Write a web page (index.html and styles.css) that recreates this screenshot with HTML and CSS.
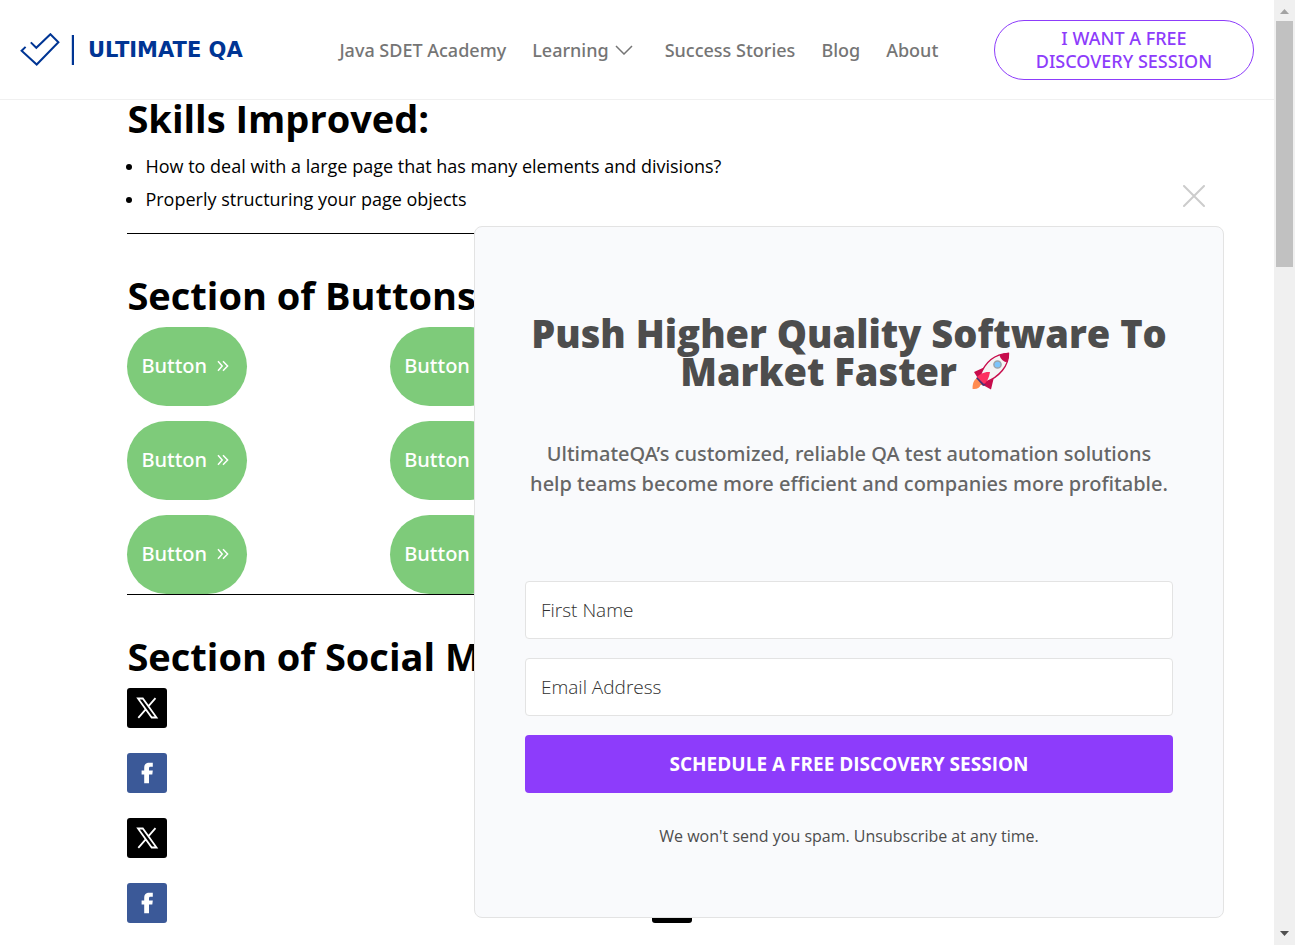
FILE: index.html
```html
<!DOCTYPE html>
<html lang="en">
<head>
<meta charset="utf-8">
<title>Ultimate QA</title>
<link rel="stylesheet" href="styles.css">
</head>
<body>
<svg class="symbols" aria-hidden="true">
  <symbol id="icon-x" viewBox="0 0 24 24">
    <path fill="none" stroke="currentColor" stroke-width="1.800" d="M3 2.500h4.800L21.500 21.500h-4.800zM20.500 2.200 13.300 10.400M10.700 13.400 3.300 21.800"/>
  </symbol>
  <symbol id="icon-facebook" viewBox="0 0 24 24">
    <path fill="currentColor" d="M9.200 22.300V13.500H6.600V9.500h2.600V7c0-3.600 1.800-5.200 5-5.200h3.600v4h-2.300c-1.200 0-1.500.6-1.500 1.700v2h3.800l-.5 4h-3.300v8.800z"/>
  </symbol>
  <symbol id="icon-more" viewBox="0 0 12 12">
    <path fill="none" stroke="currentColor" stroke-width="1.500" d="M1 1.200 5.200 6 1 10.800M6 1.200 10.600 6 6 10.800"/>
  </symbol>
</svg>

<div class="viewport">
  <header class="header">
    <a class="logo" href="#">
      <svg class="logo-mark" viewBox="0 0 54 34" aria-hidden="true">
        <path d="M5.600 13.900 1.600 17.800 16.700 31.500 38.400 9.200 30.400 1.200 16.300 14.800 10.800 9.400"/>
        <path class="logo-bar" d="M53 2v30"/>
      </svg>
      <span class="logo-text">ULTIMATE QA</span>
    </a>
    <nav class="nav">
      <a href="#">Java SDET Academy</a>
      <a class="nav-parent" href="#">Learning
        <svg class="chevron" viewBox="0 0 18 10" aria-hidden="true"><path d="M1 1l8 8 8-8"/></svg>
      </a>
      <a href="#">Success Stories</a>
      <a href="#">Blog</a>
      <a href="#">About</a>
    </nav>
    <a class="cta" href="#">I WANT A FREE DISCOVERY SESSION</a>
  </header>

  <main class="content">
    <section class="skills">
      <h1>Skills Improved:</h1>
      <ul>
        <li>How to deal with a large page that has many elements and divisions?</li>
        <li>Properly structuring your page objects</li>
      </ul>
    </section>
    <section class="section">
      <h1>Section of Buttons</h1>
      <div class="button-grid">
        <button class="pill">Button <svg><use href="#icon-more"/></svg></button>
        <button class="pill">Button <svg><use href="#icon-more"/></svg></button>
        <button class="pill">Button <svg><use href="#icon-more"/></svg></button>
        <button class="pill">Button <svg><use href="#icon-more"/></svg></button>
        <button class="pill">Button <svg><use href="#icon-more"/></svg></button>
        <button class="pill">Button <svg><use href="#icon-more"/></svg></button>
      </div>
    </section>
    <section class="section">
      <h1>Section of Social Media</h1>
      <div class="social-grid">
        <div class="social-column">
          <a class="social x" href="#" aria-label="X"><svg><use href="#icon-x"/></svg></a>
          <a class="social facebook" href="#" aria-label="Facebook"><svg><use href="#icon-facebook"/></svg></a>
          <a class="social x" href="#" aria-label="X"><svg><use href="#icon-x"/></svg></a>
          <a class="social facebook" href="#" aria-label="Facebook"><svg><use href="#icon-facebook"/></svg></a>
        </div>
        <div class="social-column">
          <a class="social x" href="#" aria-label="X"><svg><use href="#icon-x"/></svg></a>
          <a class="social facebook" href="#" aria-label="Facebook"><svg><use href="#icon-facebook"/></svg></a>
          <a class="social facebook" href="#" aria-label="Facebook"><svg><use href="#icon-facebook"/></svg></a>
          <a class="social x" href="#" aria-label="X"><svg><use href="#icon-x"/></svg></a>
        </div>
      </div>
    </section>
  </main>

  <aside class="popup">
    <button class="popup-close" aria-label="Close">
      <svg viewBox="0 0 22 22"><path d="M1 1l20 20M21 1 1 21"/></svg>
    </button>
    <form class="popup-card">
      <h2>Push Higher Quality Software To Market Faster
        <svg class="rocket" viewBox="0 0 38 38" role="img" aria-label="Rocket">
          <path fill="#ff8a50" d="M7 25C2 27 .5 31 .6 37c4 .6 7-1 8-4 2 0 4-2 3-4z"/>
          <path fill="#c70c4c" d="M13 15 2 20l5 8 11-11zM22 25l-3 12.500-9-5 12-11z"/>
          <path fill="#f4f4f4" stroke="#c70c4c" stroke-width="1.400" d="M8 24C13 10 23 2 36.500 1.400 37 14 27 25 14 30z"/>
          <path fill="#c70c4c" d="M27.500 3.500C31 1.500 34 .7 37 .8c.4 3-.6 6-2.500 9.500-3-.6-6-3-7-6.800z"/>
          <path fill="#4a3173" d="m6 25 8 8-3 1-7-8z"/>
          <path fill="#fc3060" d="M5 25c3-3 7-5.500 13-5-1 6-3 10-6 12z"/>
          <circle cx="25.500" cy="12.500" r="3.600" fill="#7cc5fb" stroke="#9aa4ab" stroke-width="1.500"/>
        </svg>
      </h2>
      <p class="lead">UltimateQA’s customized, reliable QA test automation solutions help teams become more efficient and companies more profitable.</p>
      <div class="fields">
        <input type="text" placeholder="First Name" aria-label="First Name">
        <input type="email" placeholder="Email Address" aria-label="Email Address">
        <button class="submit" type="button">SCHEDULE A FREE DISCOVERY SESSION</button>
      </div>
      <p class="note">We won't send you spam. Unsubscribe at any time.</p>
    </form>
  </aside>
</div>

<div class="scrollbar" aria-hidden="true">
  <svg viewBox="0 0 9 5"><path fill="#a3a3a3" d="M0 5 4.500 0 9 5z"/></svg>
  <div class="track"><div class="thumb"></div></div>
  <svg viewBox="0 0 9 5"><path fill="#505050" d="M0 0h9L4.500 5z"/></svg>
</div>
</body>
</html>
```
FILE: styles.css
```css
* {
  box-sizing: border-box;
}

body {
  margin: 0;
  height: 100vh;
  display: flex;
  overflow: hidden;
  background: #fff;
  color: #000;
  font-family: "Open Sans", "Noto Sans", sans-serif;
  font-size: 18px;
}

h1,
h2,
p,
ul {
  margin: 0;
}

a {
  color: inherit;
  text-decoration: none;
}

button,
input {
  font-family: inherit;
}

svg {
  display: block;
}

.symbols {
  display: none;
}

.viewport {
  flex: 1;
  position: relative;
  overflow: hidden;
}

/* Header */
.header {
  position: absolute;
  top: 0;
  left: 0;
  right: 0;
  z-index: 2;
  display: flex;
  align-items: center;
  justify-content: space-between;
  padding: 20px 20px 19px;
  background: #fff;
  border-bottom: 1px solid #f0f0f0;
}

.logo {
  display: flex;
  align-items: center;
  gap: 14px;
  color: #003594;
}

.logo-mark {
  width: 54px;
  height: 34px;
  fill: none;
  stroke: currentColor;
  stroke-width: 2;
}

.logo-bar {
  stroke-width: 2.4;
}

.logo-text {
  font-family: "DejaVu Sans", sans-serif;
  font-size: 21px;
  font-weight: 700;
  line-height: 24px;
}

.nav {
  display: flex;
  gap: 26px;
  padding-left: 41px;
  color: #757575;
  font-family: "Noto Sans", "Open Sans", sans-serif;
  font-weight: 500;
  line-height: 24px;
}

.nav-parent {
  display: flex;
  align-items: center;
  gap: 6px;
  padding-right: 6px;
}

.chevron {
  width: 18px;
  height: 10px;
  fill: none;
  stroke: currentColor;
  stroke-width: 1.5;
}

.cta {
  width: 260px;
  padding: 6px 36px;
  border: 1px solid #8d3cfb;
  border-radius: 30px;
  color: #8d3cfb;
  font-family: "Noto Sans", "Open Sans", sans-serif;
  font-weight: 500;
  line-height: 23px;
  text-align: center;
}

/* Page content */
.content {
  width: 80%;
  margin: 0 auto;
  padding-top: 98px;
}

h1 {
  font-size: 38px;
  font-weight: 700;
  line-height: 40px;
}

.skills ul {
  padding: 12px 0 17px 18px;
  line-height: 33px;
}

.section {
  padding-top: 41px;
  border-top: 1px solid #000;
}

.button-grid {
  display: grid;
  grid-template-columns: repeat(4, 1fr);
  grid-auto-flow: column;
  grid-template-rows: repeat(3, auto);
  gap: 15px 32px;
  padding-top: 12px;
  justify-items: start;
}

.pill {
  display: flex;
  align-items: center;
  gap: 10px;
  width: 120px;
  height: 79px;
  padding: 0 14px 2px;
  border: 0;
  border-radius: 40px;
  background: #7ecb7a;
  color: #fff;
  font-family: "Noto Sans", "Open Sans", sans-serif;
  font-size: 20px;
  font-weight: 500;
}

.pill svg {
  width: 12px;
  height: 12px;
}

.social-grid {
  display: grid;
  grid-template-columns: 1fr 1fr;
  gap: 30px;
  padding-top: 12px;
}

.social-column {
  display: flex;
  flex-direction: column;
  gap: 25px;
}

.social {
  display: grid;
  place-items: center;
  width: 40px;
  height: 40px;
  border-radius: 3px;
  color: #fff;
}

.social svg {
  width: 24px;
  height: 24px;
}

.x {
  background: #000;
}

.facebook {
  background: #3b5998;
}

/* Sign-up popup */
.popup {
  position: absolute;
  right: 50px;
  bottom: 27px;
  z-index: 3;
  width: 750px;
  display: flex;
  flex-direction: column;
  align-items: flex-end;
  gap: 19px;
}

.popup-close {
  margin-right: 19px;
  padding: 0;
  border: 0;
  background: none;
}

.popup-close svg {
  width: 22px;
  height: 22px;
  fill: none;
  stroke: #ccc;
  stroke-width: 2;
  stroke-linecap: round;
}

.popup-card {
  width: 100%;
  padding: 87px 50px 69px;
  border: 1px solid #e3e3e3;
  border-radius: 8px;
  background: #f9fafc;
  text-align: center;
}

h2 {
  color: #4d4d4d;
  font-size: 38px;
  font-weight: 800;
  line-height: 38px;
}

.rocket {
  display: inline-block;
  width: 38px;
  height: 38px;
  margin: 0 8px 0 5px;
  vertical-align: bottom;
}

.lead {
  padding: 49px 0 82px;
  color: #666;
  font-family: "Noto Sans", "Open Sans", sans-serif;
  font-size: 20px;
  font-weight: 500;
  line-height: 30px;
}

.fields {
  display: grid;
  gap: 19px;
}

.fields input {
  width: 100%;
  height: 58px;
  padding: 0 15px;
  border: 1px solid #e3e3e3;
  border-radius: 4px;
  background: #fff;
  font-size: 19px;
  font-weight: 300;
}

.fields input::placeholder {
  color: #303030;
  opacity: 1;
}

.submit {
  height: 58px;
  border: 0;
  border-radius: 4px;
  background: #8d3cfb;
  color: #fff;
  font-size: 19px;
  font-weight: 700;
}

.note {
  padding-top: 31px;
  color: #4d4d4d;
  font-size: 16px;
  line-height: 24px;
}

/* Scrollbar */
.scrollbar {
  width: 21px;
  display: flex;
  flex-direction: column;
  align-items: center;
  gap: 7px;
  padding: 9px 2px;
  background: #f0f0f0;
}

.scrollbar svg {
  width: 9px;
  height: 5px;
}

.track {
  flex: 1;
  width: 100%;
}

.thumb {
  height: 27.2%;
  background: #c1c1c1;
}
```
